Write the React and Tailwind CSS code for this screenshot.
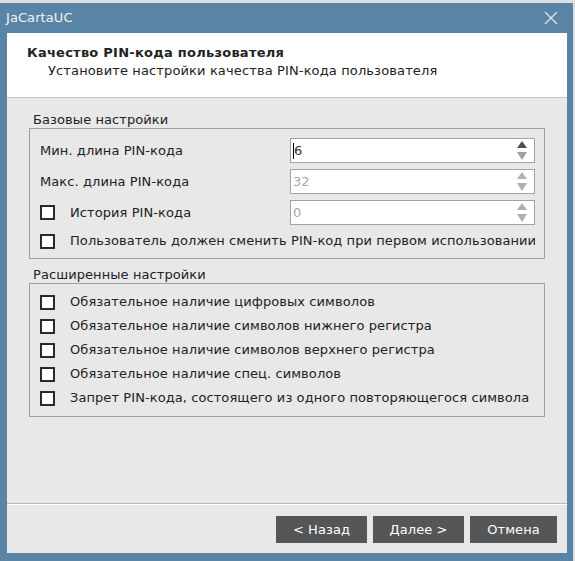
import React from 'react';

const font = { fontFamily: '"DejaVu Sans", "Noto Sans", sans-serif' };

function Checkbox() {
  return <span className="w-[15px] h-[15px] shrink-0 border-2 border-[#2a2a2a] bg-white" />;
}

function Spin({ value, enabled }) {
  return (
    <div className="w-[245px] h-[25px] flex items-center justify-between bg-white border border-[#a3a3a3] pl-[2px] pr-[7px]">
      <div className="flex items-center">
        {enabled && <span className="w-px h-[16px] bg-black" />}
        <span className={enabled ? 'text-[#333]' : 'text-[#a8a8a8]'}>{value}</span>
      </div>
      <svg width="10" height="19" viewBox="0 0 10 19">
        <polygon points="5,0 10,7 0,7" fill={enabled ? '#4f4f4f' : '#b0b0b0'} />
        <polygon points="0,11 10,11 5,19" fill={enabled ? '#a0a0a0' : '#b0b0b0'} />
      </svg>
    </div>
  );
}

function CheckRow({ children }) {
  return (
    <div className="h-[24px] flex items-center gap-[15px]">
      <Checkbox />
      <span className="whitespace-nowrap">{children}</span>
    </div>
  );
}

export default function App() {
  return (
    <div className="w-[575px] h-[561px] bg-[#dedede] pt-[3px] pr-[2px] text-[13px] tracking-[0.08px] text-[#222]" style={font}>
      <div className="h-full flex flex-col bg-[#5a84a6] pl-[7px] pr-[6px] pb-[8px]">
        <div className="h-[30px] flex items-center justify-between text-[#f2f2f2] -ml-[1px] pr-[9px]">
          <span>JaCartaUC</span>
          <svg width="14" height="14" viewBox="0 0 14 14" stroke="#dfe6ee" strokeWidth="1.3">
            <line x1="1" y1="1" x2="13" y2="13" />
            <line x1="13" y1="1" x2="1" y2="13" />
          </svg>
        </div>

        <div className="flex-1 flex flex-col bg-[#e8e8e8]">
          <div className="h-[65px] bg-white border-b border-[#c4c4c4] pl-[20px] pt-[11px]">
            <div className="font-bold leading-[18px] tracking-[0.25px]">Качество PIN-кода пользователя</div>
            <div className="pl-[21px] leading-[18px] tracking-[0.13px]">Установите настройки качества PIN-кода пользователя</div>
          </div>

          <div className="px-[22px] pt-[14px] flex flex-col">
            <div className="pl-[4px] leading-[16px]">Базовые настройки</div>
            <div className="border border-[#a0a0a0] pt-[9px] pb-[6px] pl-[10px] pr-[9px] flex flex-col gap-[6px]">
              <div className="flex items-center justify-between">
                <span>Мин. длина PIN-кода</span>
                <Spin value="6" enabled />
              </div>
              <div className="flex items-center justify-between">
                <span>Макс. длина PIN-кода</span>
                <Spin value="32" />
              </div>
              <div className="flex items-center justify-between">
                <div className="flex items-center gap-[15px]">
                  <Checkbox />
                  <span>История PIN-кода</span>
                </div>
                <Spin value="0" />
              </div>
              <div className="h-[22px] -mt-[1px] flex items-center gap-[15px]">
                <Checkbox />
                <span className="whitespace-nowrap">Пользователь должен сменить PIN-код при первом использовании</span>
              </div>
            </div>

            <div className="pl-[4px] leading-[16px] mt-[8px]">Расширенные настройки</div>
            <div className="border border-[#a0a0a0] pt-[6px] pb-[6px] pl-[10px] flex flex-col">
              <CheckRow>Обязательное наличие цифровых символов</CheckRow>
              <CheckRow>Обязательное наличие символов нижнего регистра</CheckRow>
              <CheckRow>Обязательное наличие символов верхнего регистра</CheckRow>
              <CheckRow>Обязательное наличие спец. символов</CheckRow>
              <CheckRow>Запрет PIN-кода, состоящего из одного повторяющегося символа</CheckRow>
            </div>
          </div>

          <div className="mt-auto border-t border-[#b8b8b8]">
            <div className="border-t border-white flex justify-end gap-[6px] pt-[11px] pb-[10px] pr-[10px]">
              <button className="w-[91px] h-[27px] bg-[#545658] text-white">&lt; Назад</button>
              <button className="w-[91px] h-[27px] bg-[#545658] text-white">Далее &gt;</button>
              <button className="w-[87px] h-[27px] bg-[#545658] text-white">Отмена</button>
            </div>
          </div>
        </div>
      </div>
    </div>
  );
}
